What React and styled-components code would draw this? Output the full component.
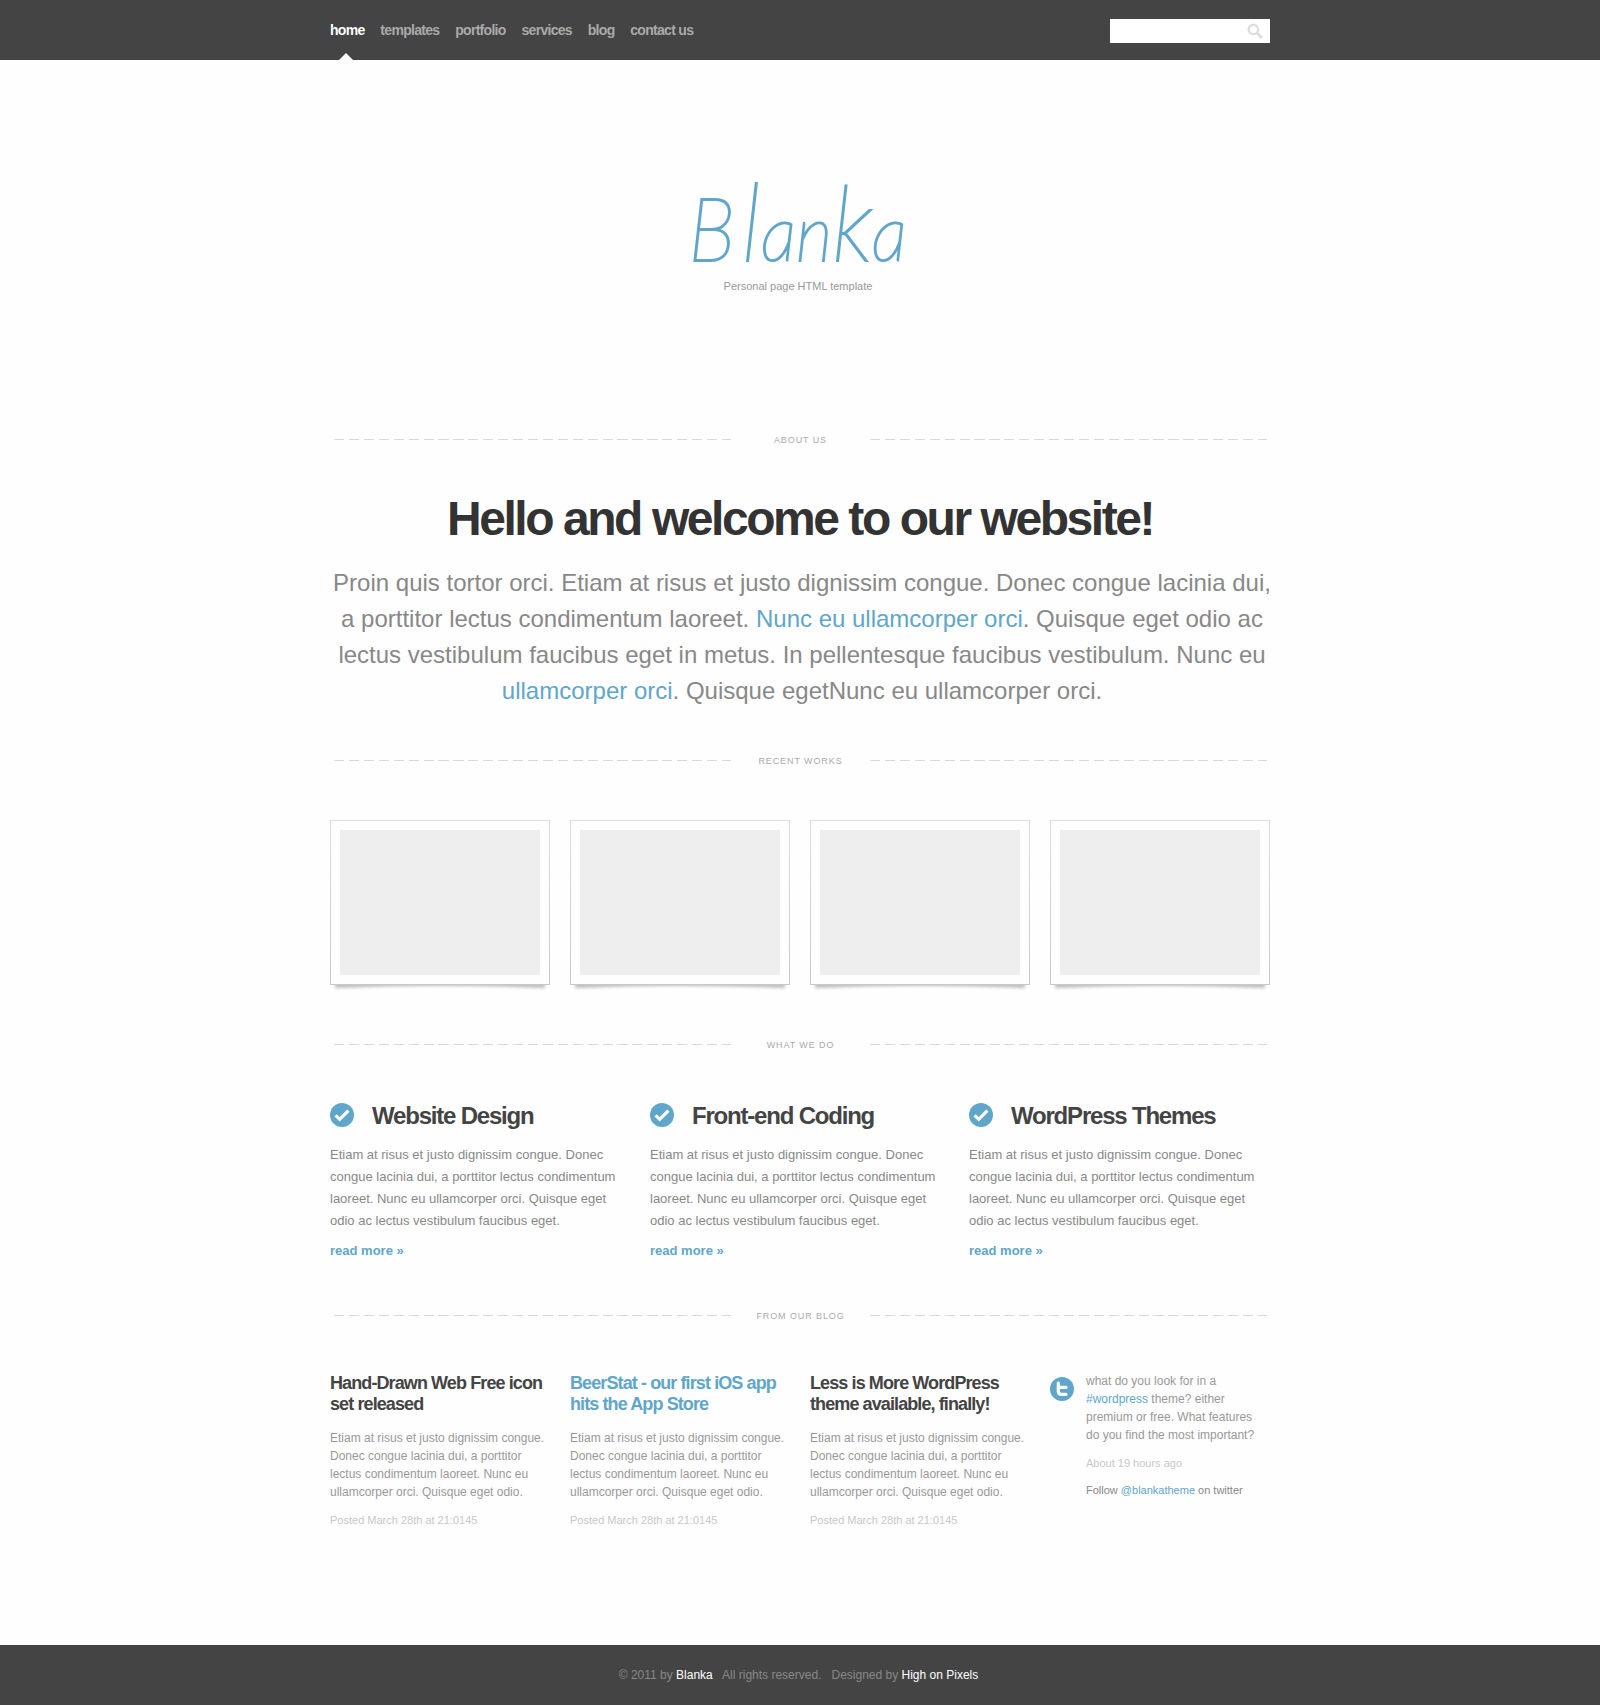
import React from "react";
import styled, { createGlobalStyle } from "styled-components";

const blue = "#60a6ca";

const GlobalStyle = createGlobalStyle`
  * { box-sizing: border-box; }
  body { margin: 0; background: #fefefe; font-family: "Liberation Sans", Arial, sans-serif; }
  h1, h2, h3, p { margin: 0; }
  a { text-decoration: none; }
`;

const Page = styled.div`
  min-height: 1705px;
  display: flex;
  flex-direction: column;
`;

const Header = styled.header`
  height: 60px;
  background: #444;
`;

const HeaderInner = styled.div`
  width: 940px;
  height: 60px;
  margin: 0 auto;
  display: flex;
  justify-content: space-between;
  align-items: center;
`;

const Nav = styled.nav`
  display: flex;
  gap: 15.8px;
`;

const NavLink = styled.a`
  position: relative;
  height: 60px;
  line-height: 60px;
  font-size: 14px;
  font-weight: 700;
  letter-spacing: -0.05em;
  color: ${(p) => (p.$active ? "#fff" : "#aaa")};

  &::after {
    content: "";
    display: ${(p) => (p.$active ? "block" : "none")};
    position: absolute;
    bottom: 0;
    left: 9px;
    border: 7px solid transparent;
    border-top: 0;
    border-bottom-color: #fefefe;
  }
`;

const Search = styled.label`
  width: 160px;
  height: 24px;
  margin-top: 2px;
  padding-right: 7px;
  background: #fff;
  display: flex;
  align-items: center;
`;

const SearchInput = styled.input`
  flex: 1;
  min-width: 0;
  border: 0;
  outline: 0;
  background: none;
`;

const Main = styled.main`
  width: 940px;
  margin: 0 auto;
  flex: 1;
`;

const Hero = styled.section`
  height: 375px;
  padding-top: 110px;
  display: flex;
  flex-direction: column;
  align-items: center;
`;

const Logo = styled.div`
  height: 107px;
  margin-right: 4px;
  line-height: 98px;
  white-space: nowrap;
  font-family: Lato, "Liberation Sans", sans-serif;
  font-size: 78px;
  font-style: italic;
  font-weight: 100;
  color: ${blue};
  -webkit-text-stroke: 2.1px ${blue};
  stroke-linejoin: round;
  transform: scaleX(0.92);
`;

const LogoLetter = styled.span`
  font-size: ${(p) => p.$size}px;
  margin-right: ${(p) => p.$after || 0}px;
`;

const Tagline = styled.p`
  margin: 3px 4px 0 0;
  font-size: 11px;
  line-height: 12px;
  color: #999;
`;

const DividerRow = styled.div`
  height: 10px;
  padding: 0 3px 0 4px;
  display: flex;
  justify-content: space-between;
`;

const Dashes = styled.span`
  width: 397px;
  height: 1px;
  margin-top: 4px;
  background: repeating-linear-gradient(90deg, #d9d9d9 0 10.2px, transparent 10.2px 14.92px);
`;

const DividerLabel = styled.h3`
  font-size: 9px;
  line-height: 10px;
  font-weight: 400;
  letter-spacing: 0.1em;
  text-transform: uppercase;
  white-space: nowrap;
  color: #aaa;
`;

const Welcome = styled.section`
  padding: 47px 0;
  text-align: center;
`;

const Title = styled.h1`
  font-size: 48px;
  line-height: 53px;
  letter-spacing: -2.45px;
  color: #333;
`;

const Intro = styled.p`
  margin: 20px -10px 0 -6px;
  font-size: 24px;
  line-height: 36px;
  color: #888;
`;

const Link = styled.a`
  color: ${blue};
`;

const Works = styled.section`
  padding: 54px 0 55px;
  display: grid;
  grid-template-columns: repeat(4, 220px);
  gap: 20px;
`;

const Frame = styled.div`
  position: relative;
  height: 165px;
  padding: 9px;
  border: 1px solid;
  border-image: linear-gradient(#dedede, #c8c8c8) 1;
`;

const Thumb = styled.div`
  height: 145px;
  background: #eee;
`;

const FrameShadow = styled.svg`
  position: absolute;
  left: 0;
  top: 164px;
  width: 218px;
  height: 9px;
`;

const Services = styled.section`
  padding: 51px 0 49px;
  display: grid;
  grid-template-columns: 300px 299px 300px;
  column-gap: 20px;
`;

const ServiceHead = styled.div`
  display: flex;
  align-items: center;
  gap: 18px;
`;

const ServiceTitle = styled.h2`
  padding-top: 1px;
  font-size: 24px;
  line-height: 27px;
  letter-spacing: -0.05em;
  color: #444;
`;

const ServiceText = styled.p`
  margin: 15px 0 8px;
  font-size: 13px;
  line-height: 22px;
  color: #888;
`;

const ReadMore = styled.a`
  display: block;
  font-size: 13px;
  line-height: 22px;
  font-weight: 700;
  color: ${blue};
`;

const Blog = styled.section`
  padding-top: 51px;
  display: grid;
  grid-template-columns: repeat(4, 220px);
  gap: 20px;
`;

const PostTitle = styled.h2`
  padding-top: 1px;
  font-size: 18px;
  line-height: 21px;
  letter-spacing: -0.05em;
  color: ${(p) => (p.$highlight ? blue : "#444")};
`;

const SmallText = styled.p`
  margin-top: ${(p) => p.$top || 0}px;
  font-size: 12px;
  line-height: 18px;
  color: #999;
`;

const Meta = styled.p`
  margin-top: ${(p) => p.$top}px;
  font-size: 11px;
  line-height: 18px;
  color: ${(p) => (p.$dark ? "#888" : "#c8c8c8")};
`;

const Tweet = styled.div`
  display: flex;
  gap: 12px;
`;

const TweetIcon = styled.svg`
  flex: none;
  width: 24px;
  height: 24px;
  margin-top: 5px;
`;

const Footer = styled.footer`
  height: 60px;
  padding-right: 3px;
  background: #444;
  display: flex;
  justify-content: center;
  align-items: center;
  font-size: 12px;
  color: #888;
  white-space: pre;
`;

const FooterLink = styled.a`
  color: #fff;
`;

const SearchIcon = () => (
  <svg width="16" height="16" viewBox="0 0 16 16" fill="none" stroke="#ddd">
    <circle cx="6.4" cy="6.4" r="4.7" strokeWidth="2.4" />
    <path d="M9.8 9.8L15 15" strokeWidth="2.8" />
  </svg>
);

const CheckIcon = () => (
  <svg width="24" height="24" viewBox="0 0 24 24" fill="none">
    <circle cx="12" cy="12" r="12" fill={blue} />
    <path d="M5.6 12.3L9.7 16.3L18.4 7.7" stroke="#fff" strokeWidth="3.2" />
  </svg>
);

const Divider = ({ children }) => (
  <DividerRow>
    <Dashes />
    <DividerLabel>{children}</DividerLabel>
    <Dashes />
  </DividerRow>
);

const Work = ({ id }) => (
  <Frame>
    <Thumb />
    <FrameShadow viewBox="0 0 218 9">
      <defs>
        <filter id={`soft${id}`} x="-5%" y="-80%" width="110%" height="260%">
          <feGaussianBlur stdDeviation="1.5" />
        </filter>
      </defs>
      <path d="M4 -3H214V3.2Q109 -1.4 4 3.2Z" fill="#000" fillOpacity="0.24" filter={`url(#soft${id})`} />
    </FrameShadow>
  </Frame>
);

const services = ["Website Design", "Front-end Coding", "WordPress Themes"];

const posts = [
  { title: ["Hand-Drawn Web Free icon", "set released"] },
  { title: ["BeerStat - our first iOS app", "hits the App Store"], highlight: true },
  { title: ["Less is More WordPress", "theme available, finally!"] },
];

const navItems = ["home", "templates", "portfolio", "services", "blog", "contact us"];

export default function App() {
  return (
    <Page>
      <GlobalStyle />
      <Header>
        <HeaderInner>
          <Nav>
            {navItems.map((item, i) => (
              <NavLink key={item} $active={i === 0}>{item}</NavLink>
            ))}
          </Nav>
          <Search>
            <SearchInput aria-label="Search" />
            <SearchIcon />
          </Search>
        </HeaderInner>
      </Header>

      <Main>
        <Hero>
          <Logo>
            <LogoLetter $size={88} $after={7}>B</LogoLetter>
            <LogoLetter $size={108}>l</LogoLetter>
            an
            <LogoLetter $size={104}>k</LogoLetter>
            a
          </Logo>
          <Tagline>Personal page HTML template</Tagline>
        </Hero>

        <Divider>About us</Divider>
        <Welcome>
          <Title>Hello and welcome to our website!</Title>
          <Intro>
            Proin quis tortor orci. Etiam at risus et justo dignissim congue. Donec congue lacinia dui,
            <br />
            a porttitor lectus condimentum laoreet. <Link>Nunc eu ullamcorper orci</Link>. Quisque eget odio ac
            <br />
            lectus vestibulum faucibus eget in metus. In pellentesque faucibus vestibulum. Nunc eu
            <br />
            <Link>ullamcorper orci</Link>. Quisque egetNunc eu ullamcorper orci.
          </Intro>
        </Welcome>

        <Divider>Recent works</Divider>
        <Works>
          {[1, 2, 3, 4].map((n) => (
            <Work key={n} id={n} />
          ))}
        </Works>

        <Divider>What we do</Divider>
        <Services>
          {services.map((title) => (
            <div key={title}>
              <ServiceHead>
                <CheckIcon />
                <ServiceTitle>{title}</ServiceTitle>
              </ServiceHead>
              <ServiceText>
                Etiam at risus et justo dignissim congue. Donec
                <br />
                congue lacinia dui, a porttitor lectus condimentum
                <br />
                laoreet. Nunc eu ullamcorper orci. Quisque eget
                <br />
                odio ac lectus vestibulum faucibus eget.
              </ServiceText>
              <ReadMore>read more »</ReadMore>
            </div>
          ))}
        </Services>

        <Divider>From our blog</Divider>
        <Blog>
          {posts.map((post) => (
            <article key={post.title[0]}>
              <PostTitle $highlight={post.highlight}>
                {post.title[0]}
                <br />
                {post.title[1]}
              </PostTitle>
              <SmallText $top={14}>
                Etiam at risus et justo dignissim congue.
                <br />
                Donec congue lacinia dui, a porttitor
                <br />
                lectus condimentum laoreet. Nunc eu
                <br />
                ullamcorper orci. Quisque eget odio.
              </SmallText>
              <Meta $top={10}>Posted March 28th at 21:0145</Meta>
            </article>
          ))}
          <Tweet>
            <TweetIcon viewBox="0 0 24 24" fill="none">
              <circle cx="12" cy="12" r="12" fill={blue} />
              <path
                d="M8.3 6.2V14.2Q8.3 17.4 11.6 17.4H16M8.3 10.4H16"
                stroke="#fff"
                strokeWidth="3.2"
                strokeLinecap="round"
              />
            </TweetIcon>
            <div>
              <SmallText>
                what do you look for in a
                <br />
                <Link>#wordpress</Link> theme? either
                <br />
                premium or free. What features
                <br />
                do you find the most important?
              </SmallText>
              <Meta $top={10}>About 19 hours ago</Meta>
              <Meta $top={9} $dark>
                Follow <Link>@blankatheme</Link> on twitter
              </Meta>
            </div>
          </Tweet>
        </Blog>
      </Main>

      <Footer>
        {"© 2011 by "}
        <FooterLink>Blanka</FooterLink>
        {"   All rights reserved.   Designed by "}
        <FooterLink>High on Pixels</FooterLink>
      </Footer>
    </Page>
  );
}
